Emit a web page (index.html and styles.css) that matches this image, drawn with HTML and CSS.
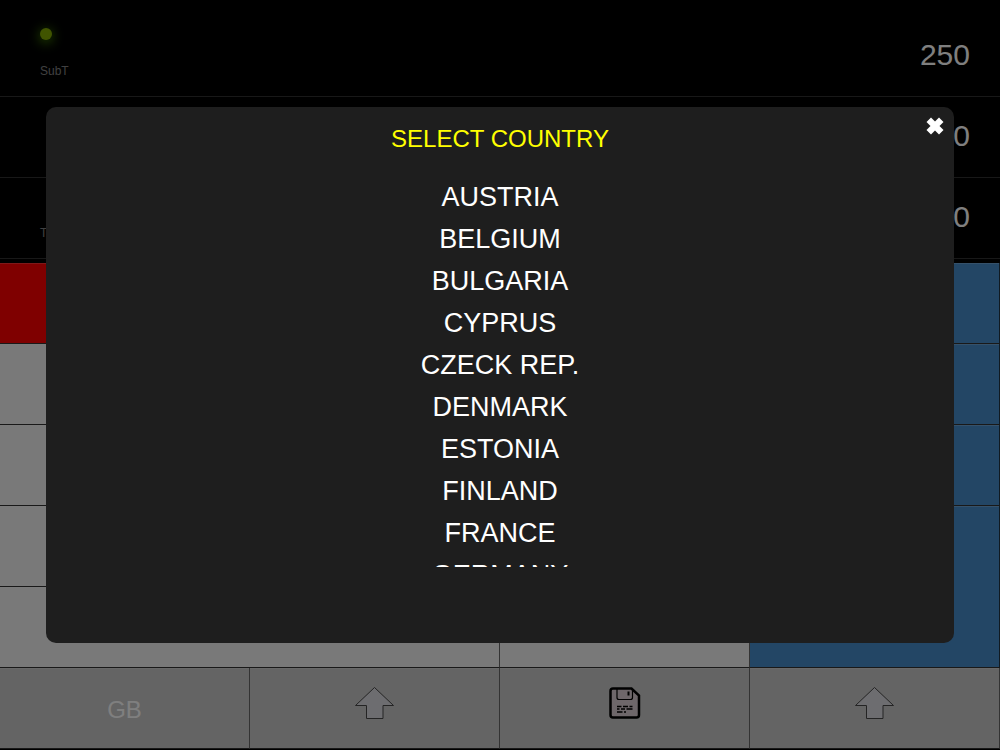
FILE: index.html
```html
<!DOCTYPE html>
<html lang="en">
<head>
<meta charset="utf-8">
<meta name="viewport" content="width=device-width, initial-scale=1">
<title>Select country</title>
<link rel="stylesheet" href="styles.css">
</head>
<body>
<main class="app">
  <section class="display">
    <div class="line">
      <div class="info"><span class="led"></span><span class="label">SubT</span></div>
      <output class="value">250</output>
    </div>
    <div class="line">
      <div class="info"></div>
      <output class="value">0</output>
    </div>
    <div class="line">
      <div class="info"><span class="label">Total</span></div>
      <output class="value">0</output>
    </div>
  </section>
  <section class="keypad">
    <button class="key red" aria-label="Clear"></button>
    <button class="key" aria-label="Percent"></button>
    <button class="key" aria-label="Sign"></button>
    <button class="key blue" aria-label="Divide"></button>
    <button class="key" aria-label="7"></button>
    <button class="key" aria-label="8"></button>
    <button class="key" aria-label="9"></button>
    <button class="key blue" aria-label="Multiply"></button>
    <button class="key" aria-label="4"></button>
    <button class="key" aria-label="5"></button>
    <button class="key" aria-label="6"></button>
    <button class="key blue" aria-label="Subtract"></button>
    <button class="key" aria-label="1"></button>
    <button class="key" aria-label="2"></button>
    <button class="key" aria-label="3"></button>
    <button class="key blue tall" aria-label="Add"></button>
    <button class="key wide" aria-label="0"></button>
    <button class="key" aria-label="Decimal point"></button>
    <button class="key tool">GB</button>
    <button class="key tool" aria-label="Up">
      <svg class="icon arrow" viewBox="0 0 40 34"><path d="M19.500 1.500 38.500 19.500H28V32.500H11.500V19.500H0.500Z"/></svg>
    </button>
    <button class="key tool" aria-label="Save">
      <svg class="icon disk" viewBox="0 0 32 32">
        <path class="body" d="M4 1.5H22.500L30 8.500V28Q30 30.500 27.500 30.500H4Q1.500 30.500 1.500 28V4Q1.500 1.500 4 1.500Z"/>
        <path class="shutter" d="M8 2V10.500Q8 12.500 10 12.500H21.500Q23.500 12.500 23.500 10.500V2"/>
        <path class="slot" d="M19.500 4.500V8.500"/>
        <path class="text" d="M8 19.500H12.500M14 19.500H19M20.500 19.500H23.500M8 22H10.500M12 22H16M17.500 22H23.500M8 25H13.500M15 25H17"/>
      </svg>
    </button>
    <button class="key tool" aria-label="Up">
      <svg class="icon arrow" viewBox="0 0 40 34"><path d="M19.500 1.500 38.500 19.500H28V32.500H11.500V19.500H0.500Z"/></svg>
    </button>
  </section>
</main>
<div class="overlay">
  <div class="dialog" role="dialog" aria-labelledby="title">
    <button class="close" aria-label="Close">
      <svg class="cross" viewBox="0 0 18 18"><path d="M5 0.500 9 4.500 13 0.500 17.500 5 13.500 9 17.500 13 13 17.500 9 13.500 5 17.500 0.500 13 4.500 9 0.500 5Z"/></svg>
    </button>
    <h1 class="title" id="title">SELECT COUNTRY</h1>
    <ul class="countries">
      <li><button class="country">AUSTRIA</button></li>
      <li><button class="country">BELGIUM</button></li>
      <li><button class="country">BULGARIA</button></li>
      <li><button class="country">CYPRUS</button></li>
      <li><button class="country">CZECK REP.</button></li>
      <li><button class="country">DENMARK</button></li>
      <li><button class="country">ESTONIA</button></li>
      <li><button class="country">FINLAND</button></li>
      <li><button class="country">FRANCE</button></li>
      <li><button class="country">GERMANY</button></li>
    </ul>
  </div>
</div>
</body>
</html>
```
FILE: styles.css
```css
* {
  box-sizing: border-box;
}

body {
  margin: 0;
  background: #000;
  font-family: "Liberation Sans", Arial, sans-serif;
}

button {
  font: inherit;
  cursor: pointer;
}

.app {
  display: flex;
  flex-direction: column;
  gap: 4px;
  height: 100vh;
  padding-bottom: 1px;
}

.display {
  display: flex;
  flex-direction: column;
}

.line {
  display: flex;
  justify-content: space-between;
  align-items: flex-end;
  height: 81px;
  padding: 0 30px 18px 40px;
  border-bottom: 1px solid #303030;
}

.line:first-child {
  height: 97px;
}

.info {
  display: flex;
  flex-direction: column;
  gap: 24px;
}

.led {
  width: 12px;
  height: 12px;
  border-radius: 50%;
  background: #80a800;
  box-shadow: 0 2px 12px 1px #408000;
}

.label {
  color: #808080;
  font-size: 12px;
  line-height: 14px;
}

.value {
  color: #fff;
  font-size: 30px;
  line-height: 46px;
}

.keypad {
  display: grid;
  flex: 1;
  grid-template-columns: repeat(4, 1fr);
  grid-template-rows: repeat(6, 1fr);
}

.key {
  display: flex;
  align-items: center;
  justify-content: center;
  padding: 0;
  border: 0;
  border-right: 1px solid #666;
  border-bottom: 1px solid #333;
  background: #f2f2f2;
  box-shadow: inset 0 1px rgb(255 255 255 / 20%);
}

.red {
  background: #f00;
}

.blue {
  border-right-color: #203444;
  background: #468dcb;
}

.tall {
  grid-row: span 2;
}

.wide {
  grid-column: span 2;
}

.tool {
  padding-top: 4px;
  background: #c8c8c8;
  color: #fff;
  font-size: 24px;
}

.icon {
  margin-bottom: 14px;
}

.arrow {
  width: 40px;
  height: 34px;
  fill: #dadae0;
  stroke: #484848;
}

.disk {
  width: 32px;
  height: 32px;
  fill: none;
  stroke: #000;
}

.body {
  fill: #dccfd4;
  stroke-width: 2.5;
}

.shutter {
  stroke-width: 1.2;
}

.slot {
  stroke-width: 2;
}

.text {
  stroke-width: 1.3;
}

.overlay {
  position: fixed;
  inset: 0;
  display: flex;
  align-items: center;
  justify-content: center;
  background: rgb(0 0 0 / 50%);
}

.dialog {
  position: relative;
  display: flex;
  flex-direction: column;
  width: calc(100% - 92px);
  max-height: 100%;
  padding: 16px 20px 76px;
  border-radius: 10px;
  background: #1e1e1e;
}

.close {
  position: absolute;
  top: 10px;
  right: 10px;
  display: flex;
  padding: 0;
  border: 0;
  background: none;
}

.cross {
  width: 18px;
  height: 18px;
  fill: #fff;
}

.title {
  margin: 0 0 21px;
  color: #ff0;
  font-size: 24px;
  font-weight: 400;
  line-height: 32px;
  text-align: center;
}

.countries {
  max-height: 391px;
  margin: 0;
  padding: 0;
  overflow-y: auto;
  list-style: none;
  scrollbar-width: none;
}

.country {
  display: block;
  width: 100%;
  padding: 0;
  border: 0;
  background: none;
  color: #fff;
  font-size: 27px;
  line-height: 42px;
  text-align: center;
}
```
